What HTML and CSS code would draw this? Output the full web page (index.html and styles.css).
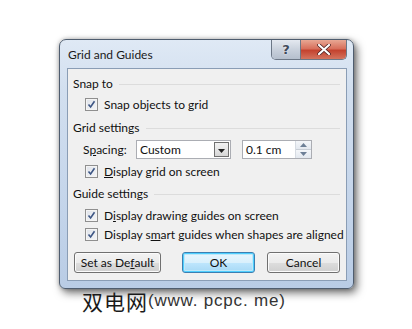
FILE: index.html
```html
<!DOCTYPE html>
<html>
<head>
<meta charset="utf-8">
<link rel="stylesheet" href="styles.css">
</head>
<body>
<div class="stage">
  <div class="window">
    <div class="titlebar">
      <span class="title">Grid and Guides</span>
      <div class="caption-btns">
        <div class="cbtn help">?</div>
        <div class="cbtn close">
          <svg width="14" height="11" viewBox="0 0 14 11"><path d="M2 1 L12 10 M12 1 L2 10" stroke="#4a2020" stroke-width="3.6" stroke-linecap="round"/><path d="M2 1 L12 10 M12 1 L2 10" stroke="#fff" stroke-width="2.2" stroke-linecap="round"/></svg>
        </div>
      </div>
    </div>
    <div class="panel">
      <div class="hdr"><span>Snap to</span><i class="rule"></i></div>
      <div class="chk"><span class="box"><svg width="9" height="9" viewBox="0 0 9 9"><path d="M1.5 4.5 L3.6 7 L7.5 1.2" fill="none" stroke="#3d5685" stroke-width="1.6"/></svg></span><span>Snap objects to <u>g</u>rid</span></div>
      <div class="hdr mt4"><span>Grid settings</span><i class="rule"></i></div>
      <div class="spacing">
        <span class="lbl">S<u>p</u>acing:</span>
        <div class="combo"><span class="val">Custom</span><span class="drop"><svg width="7" height="4" viewBox="0 0 7 4"><path d="M0 0 H7 L3.5 4 Z" fill="#222"/></svg></span></div>
        <div class="num"><span class="val">0.1 cm</span><span class="spin"><span class="sp up"><svg width="7" height="4" viewBox="0 0 7 4"><path d="M0 4 H7 L3.5 0 Z" fill="#6d7f96"/></svg></span><span class="sp dn"><svg width="7" height="4" viewBox="0 0 7 4"><path d="M0 0 H7 L3.5 4 Z" fill="#6d7f96"/></svg></span></span></div>
      </div>
      <div class="chk"><span class="box"><svg width="9" height="9" viewBox="0 0 9 9"><path d="M1.5 4.5 L3.6 7 L7.5 1.2" fill="none" stroke="#3d5685" stroke-width="1.6"/></svg></span><span><u>D</u>isplay grid on screen</span></div>
      <div class="hdr mt3"><span>Guide settings</span><i class="rule"></i></div>
      <div class="chk mt1"><span class="box"><svg width="9" height="9" viewBox="0 0 9 9"><path d="M1.5 4.5 L3.6 7 L7.5 1.2" fill="none" stroke="#3d5685" stroke-width="1.6"/></svg></span><span>D<u>i</u>splay drawing guides on screen</span></div>
      <div class="chk h19"><span class="box"><svg width="9" height="9" viewBox="0 0 9 9"><path d="M1.5 4.5 L3.6 7 L7.5 1.2" fill="none" stroke="#3d5685" stroke-width="1.6"/></svg></span><span>Display s<u>m</u>art guides when shapes are aligned</span></div>
      <div class="buttons">
        <div class="btn wide">Set as De<u>f</u>ault</div>
        <div class="btn ok">OK</div>
        <div class="btn">Cancel</div>
      </div>
    </div>
  </div>
  <div class="caption"><span class="cn">双电网</span><span class="en">(www. pcpc. me)</span></div>
</div>
</body>
</html>
```
FILE: styles.css
```css
html, body {
  margin: 0;
  padding: 0;
  background: #ffffff;
}
body {
  width: 412px;
  height: 329px;
  overflow: hidden;
  font-family: "Lato", "Noto Sans", sans-serif;
}
.stage {
  padding: 39px 0 0 59px;
}
.window {
  width: 295px;
  height: 250px;
  box-sizing: border-box;
  border: 1px solid #4f5d6f;
  border-radius: 7px 7px 6px 6px;
  background: linear-gradient(180deg, #dfe9f5 0%, #d2dfef 20%, #c3d4ea 70%, #b9cce5 100%);
  box-shadow: 3px 4px 9px rgba(0,0,0,0.55), 0 0 4px rgba(0,0,0,0.25);
  display: flex;
  flex-direction: column;
  padding: 0 6px 7px 7px;
}
.titlebar {
  height: 28px;
  flex: none;
  display: flex;
  align-items: flex-start;
  justify-content: space-between;
}
.title {
  font-size: 12px;
  color: #1a1a1a;
  line-height: 28px;
  padding-left: 1px;
  padding-top: 1px;
}
.caption-btns {
  display: flex;
  border: 1px solid #6c7786;
  border-top: none;
  border-radius: 0 0 5px 5px;
  overflow: hidden;
  height: 19px;
}
.cbtn {
  display: flex;
  align-items: center;
  justify-content: center;
  height: 19px;
}
.help {
  width: 28px;
  background: linear-gradient(180deg, #e4e9f0 0%, #c9d1dc 50%, #b5bfcd 100%);
  color: #404a5a;
  font-family: "DejaVu Sans", sans-serif;
  font-weight: bold;
  font-size: 13px;
  border-right: 1px solid #6c7786;
  text-shadow: 0 0 2px #fff;
}
.close {
  width: 45px;
  background: linear-gradient(180deg, #e8a894 0%, #d8705c 45%, #c4432f 55%, #d4745e 100%);
}
.panel {
  flex: 1;
  min-height: 0;
  background: #f0f0f0;
  border: 1px solid #8a9db5;
  padding: 5px 6px 0 5px;
  font-size: 12px;
  color: #111;
  display: flex;
  flex-direction: column;
}
.hdr {
  height: 20px;
  line-height: 20px;
  display: flex;
  align-items: center;
  gap: 6px;
  flex: none;
}
.rule {
  flex: 1;
  height: 1px;
  background: #dcdcdc;
  margin-top: 1px;
}
.mt4 { margin-top: 4px; }
.mt3 { margin-top: 3px; }
.mt1 { margin-top: 1px; }
.chk {
  height: 20px;
  flex: none;
  display: flex;
  align-items: center;
  padding-left: 12px;
  gap: 6px;
  white-space: nowrap;
}
.h19 { height: 19px; }
.box {
  width: 11px;
  height: 11px;
  flex: none;
  border: 1px solid #8f8f8f;
  background: linear-gradient(135deg, #dfe3ea 0%, #f4f5f7 100%);
  box-shadow: inset 0 0 0 1px #f4f4f4;
  display: flex;
  align-items: center;
  justify-content: center;
}
.spacing {
  height: 23px;
  flex: none;
  display: flex;
  align-items: center;
  padding-left: 10px;
}
.lbl {
  width: 53px;
}
.combo {
  width: 93px;
  height: 17px;
  border: 1px solid #abadb3;
  background: #fff;
  display: flex;
  align-items: center;
  justify-content: space-between;
}
.val {
  padding-left: 3px;
  line-height: 17px;
}
.drop {
  width: 15px;
  height: 15px;
  margin-right: 1px;
  border: 1px solid #707070;
  box-sizing: border-box;
  background: linear-gradient(180deg, #f2f2f2 0%, #e6e6e6 50%, #d6d6d6 100%);
  display: flex;
  align-items: center;
  justify-content: center;
  padding-top: 3px;
}
.num {
  margin-left: 11px;
  width: 68px;
  height: 17px;
  border: 1px solid #abadb3;
  background: #fff;
  display: flex;
  align-items: center;
  justify-content: space-between;
}
.spin {
  width: 15px;
  height: 17px;
  display: flex;
  flex-direction: column;
  border-left: 1px solid #d6dbe2;
}
.sp {
  flex: 1;
  display: flex;
  align-items: center;
  justify-content: center;
  background: linear-gradient(180deg, #f4f6f9 0%, #e3e8ef 100%);
}
.sp.up { border-bottom: 1px solid #c8ced6; }
.buttons {
  margin-top: 8px;
  display: flex;
  padding-left: 1px;
  flex: none;
}
.btn {
  width: 71px;
  height: 19px;
  border: 1px solid #707070;
  border-radius: 3px;
  background: linear-gradient(180deg, #f3f3f3 0%, #ebebeb 50%, #dddddd 51%, #cfcfcf 100%);
  box-shadow: inset 0 0 0 1px #fbfbfb;
  text-align: center;
  line-height: 19px;
  color: #111;
}
.btn.wide {
  width: 85px;
}
.btn.ok {
  margin-left: auto;
  margin-right: 12px;
  border-color: #3c7fb1;
  box-shadow: inset 0 0 0 1px #4fcfff, inset 0 0 0 2px #c0e8f8;
  background: linear-gradient(180deg, #eaf6fd 0%, #d9f0fc 50%, #bee6fd 51%, #a7d9f5 100%);
}
.caption {
  margin-top: 0px;
  padding-left: 23px;
  height: 24px;
  display: flex;
  align-items: center;
  color: #222;
}
.cn {
  font-family: "Noto Sans CJK SC", sans-serif;
  font-size: 21px;
  letter-spacing: 1px;
  color: #1a1a1a;
}
.en {
  font-family: "Liberation Sans", sans-serif;
  font-size: 17px;
  color: #333;
  letter-spacing: 0.8px;
}
```
